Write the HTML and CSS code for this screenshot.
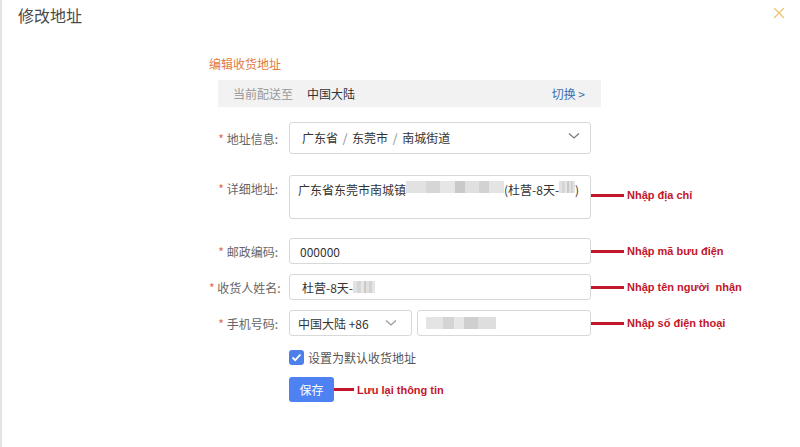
FILE: index.html
```html
<!DOCTYPE html>
<html lang="zh">
<head>
<meta charset="utf-8">
<link rel="stylesheet" href="styles.css">
</head>
<body>
<div class="dialog">
  <div class="header">
    <div class="title">修改地址</div>
    <svg class="close" width="12" height="12" viewBox="0 0 12 12"><path d="M1 1L11 11M11 1L1 11" stroke="#efc26e" stroke-width="1.3" fill="none"/></svg>
  </div>
  <div class="content">
    <div class="section-title">编辑收货地址</div>
    <div class="region-bar">
      <span class="muted">当前配送至</span>
      <span class="region">中国大陆</span>
      <span class="switch">切换 &gt;</span>
    </div>
    <div class="form">
      <div class="row r-addr">
        <div class="label"><span class="req">*</span> 地址信息:</div>
        <div class="field select tall">
          <span class="crumbs">广东省 <i>/</i> 东莞市 <i>/</i> 南城街道</span>
          <svg class="chev" width="12" height="8" viewBox="0 0 12 8"><path d="M1 1.5L6 6L11 1.5" stroke="#777" stroke-width="1.2" fill="none"/></svg>
        </div>
      </div>
      <div class="row r-detail">
        <div class="label"><span class="req">*</span> 详细地址:</div>
        <div class="field textarea">广东省东莞市南城镇<span class="blur w98"></span>(杜营-8天-<span class="blur w16"></span>)</div>
        <div class="note"><span class="line"></span>Nhập địa chỉ</div>
      </div>
      <div class="row r-zip">
        <div class="label"><span class="req">*</span> 邮政编码:</div>
        <div class="field">000000</div>
        <div class="note"><span class="line"></span>Nhập mã bưu điện</div>
      </div>
      <div class="row r-name">
        <div class="label"><span class="req">*</span> 收货人姓名:</div>
        <div class="field name">杜营-8天-<span class="blur w22"></span></div>
        <div class="note"><span class="line"></span>Nhập tên người&nbsp; nhận</div>
      </div>
      <div class="row r-phone">
        <div class="label"><span class="req">*</span> 手机号码:</div>
        <div class="phone">
          <div class="field select country">中国大陆 +86
            <svg class="chev" width="12" height="8" viewBox="0 0 12 8"><path d="M1 1.5L6 6L11 1.5" stroke="#999" stroke-width="1.2" fill="none"/></svg>
          </div>
          <div class="field number"><span class="blur w70"></span></div>
        </div>
        <div class="note"><span class="line"></span>Nhập số điện thoại</div>
      </div>
      <div class="row r-check">
        <div></div>
        <label class="check"><span class="box"><svg width="11" height="9" viewBox="0 0 11 9"><path d="M1.5 4.5L4.2 7.2L9.5 1.5" stroke="#fff" stroke-width="1.8" fill="none"/></svg></span>设置为默认收货地址</label>
      </div>
      <div class="row r-save">
        <div></div>
        <div class="save-wrap"><button class="save">保存</button><div class="note short"><span class="line"></span>Lưu lại thông tin</div></div>
      </div>
    </div>
  </div>
</div>
</body>
</html>
```
FILE: styles.css
```css
* { box-sizing: border-box; }
html, body { margin: 0; padding: 0; background: #fff; }
body {
  font-family: "Liberation Sans", "Noto Sans CJK SC", sans-serif;
  font-size: 12px;
  color: #333;
  width: 800px;
  height: 447px;
  overflow: hidden;
}
.dialog {
  height: 447px;
  border-left: 2px solid #e3e3e3;
}
.header {
  display: flex;
  justify-content: space-between;
  align-items: flex-start;
  padding: 5px 15px 0 16px;
  height: 56px;
}
.title {
  font-family: "Noto Sans CJK SC", sans-serif;
  font-size: 16px;
  line-height: 20px;
  color: #4a4a4a;
}
.close { margin-top: 2px; }
.content {
  margin-left: 207px;
  width: 400px;
}
.section-title {
  font-family: "Noto Sans CJK SC", sans-serif;
  color: #e27a3f;
  font-size: 12px;
  line-height: 16px;
}
.region-bar {
  margin: 8px 0 0 9px;
  width: 383px;
  height: 27px;
  background: #f2f2f2;
  display: flex;
  align-items: center;
  padding: 0 16px 0 15px;
  font-family: "Noto Sans CJK SC", sans-serif;
}
.muted { color: #999; }
.region { color: #333; margin-left: 14px; }
.switch { margin-left: auto; color: #3a6fb0; }
.form {
  display: flex;
  flex-direction: column;
}
.row {
  display: grid;
  grid-template-columns: 69px 302px auto;
  column-gap: 11px;
  align-items: center;
}
.label {
  text-align: right;
  color: #666;
  font-family: "Noto Sans CJK SC", sans-serif;
  white-space: nowrap;
}
.req { color: #e2694a; }
.field {
  border: 1px solid #d8d8d8;
  border-radius: 3px;
  height: 26px;
  display: flex;
  align-items: center;
  padding: 0 10px;
  color: #333;
  font-family: "Noto Sans CJK SC", sans-serif;
  white-space: nowrap;
}
.select { justify-content: space-between; }
.tall { height: 32px; padding-left: 12px; padding-right: 10px; align-items: flex-start; padding-top: 6px; }
.crumbs i { font-style: normal; color: #888; margin: 0 2px; }
.tall .chev { margin-top: 3px; }
.textarea {
  height: 43px;
  align-items: flex-start;
  padding-top: 5px;
  padding-left: 8px;
}
.name { padding-left: 12px; }
.blur {
  display: inline-block;
  height: 12px;
  background: linear-gradient(90deg, #e2e2e2 0 20%, #d6d6d6 20% 35%, #e6e6e6 35% 50%, #c9c9c9 50% 60%, #e0e0e0 60% 75%, #d2d2d2 75% 85%, #e4e4e4 85% 100%);
}
.w98 { width: 98px; }
.w16 { width: 16px; }
.w22 { width: 22px; }
.w70 { width: 70px; background: linear-gradient(90deg, #e4e4e4 0 25%, #d4d4d4 25% 40%, #e6e6e6 40% 55%, #cfcfcf 55% 75%, #dedede 75% 100%); }
.phone { display: flex; gap: 5px; }
.country { width: 123px; padding-left: 8px; padding-right: 14px; }
.number { flex: 1; padding-left: 8px; }
.note {
  display: flex;
  align-items: center;
  color: #c3162b;
  font-family: "Liberation Sans", sans-serif;
  font-weight: bold;
  font-size: 11px;
  margin-left: -11px;
  white-space: nowrap;
}
.line {
  display: inline-block;
  width: 33px;
  height: 3px;
  background: #c3162b;
  margin-right: 3px;
}
.r-addr { margin-top: 15px; }
.r-detail { margin-top: 21px; align-items: start; }
.r-detail .label { margin-top: 5px; }
.r-detail .field { height: 44px; }
.r-detail .note { margin-top: 14px; }
.r-zip { margin-top: 19px; }
.r-name { margin-top: 10px; }
.r-phone { margin-top: 10px; }
.r-check { margin-top: 13px; }
.check {
  display: flex;
  align-items: center;
  color: #555;
  font-family: "Noto Sans CJK SC", sans-serif;
}
.box {
  width: 15px;
  height: 15px;
  border-radius: 3px;
  background: #4d80ea;
  display: inline-flex;
  align-items: center;
  justify-content: center;
  margin-right: 4px;
}
.r-save { margin-top: 11px; }
.save-wrap { display: flex; align-items: center; }
.save {
  width: 45px;
  height: 25px;
  border: none;
  border-radius: 3px;
  background: #4e82f2;
  color: #fff;
  font-family: "Noto Sans CJK SC", sans-serif;
  font-size: 12px;
  padding: 0;
}
.note.short { margin-left: 0; font-size: 11px; }
.note.short .line { width: 20px; }
```
